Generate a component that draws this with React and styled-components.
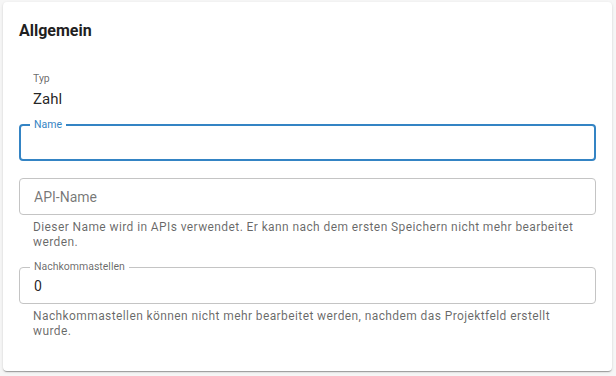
import React from 'react';
import styled, { createGlobalStyle } from 'styled-components';

const GlobalStyle = createGlobalStyle`
	html, body {
		margin: 0;
		padding: 0;
		background: #f6f6f6;
		font-family: Roboto, 'Liberation Sans', Arial, sans-serif;
		color: rgba(0, 0, 0, 0.87);
	}
	* {
		box-sizing: border-box;
	}
`;

const FIELDS = [
	{ label: 'Name', value: '', focused: true },
	{
		placeholder: 'API-Name',
		helper: 'Dieser Name wird in APIs verwendet. Er kann nach dem ersten Speichern nicht mehr bearbeitet werden.',
	},
	{
		label: 'Nachkommastellen',
		value: '0',
		helper: 'Nachkommastellen können nicht mehr bearbeitet werden, nachdem das Projektfeld erstellt wurde.',
	},
];

const App = () => {
	return (
		<>
			<GlobalStyle />
			<Page>
				<Card>
					<CardTitle>Allgemein</CardTitle>
					<ReadOnly>
						<ReadOnlyLabel>Typ</ReadOnlyLabel>
						<ReadOnlyValue>Zahl</ReadOnlyValue>
					</ReadOnly>
					<Fields>
						{FIELDS.map(({ label, value, placeholder, helper, focused }, i) => (
							<Field key={`field-${i}`}>
								<InputBox focused={focused}>
									{label && <FloatingLabel focused={focused}>{label}</FloatingLabel>}
									<Input defaultValue={value} placeholder={placeholder} />
								</InputBox>
								{helper && <HelperText>{helper}</HelperText>}
							</Field>
						))}
					</Fields>
				</Card>
			</Page>
		</>
	);
};

const Page = styled.div`
	padding: 2px 4px 5px 3px;
`;

const Card = styled.div`
	background: #fff;
	border-radius: 4px;
	box-shadow: 0px 2px 1px -1px rgba(0, 0, 0, 0.2), 0px 1px 1px 0px rgba(0, 0, 0, 0.14),
		0px 1px 3px 0px rgba(0, 0, 0, 0.12);
	padding: 17px 16px 32px 16px;
	height: 369px;
`;

const CardTitle = styled.h2`
	margin: 0;
	font-size: 16px;
	font-weight: 700;
	line-height: 24px;
	color: #1f1f1f;
`;

const ReadOnly = styled.div`
	display: flex;
	flex-direction: column;
	gap: 3px;
	margin-top: 29px;
	padding-left: 14px;
`;

const ReadOnlyLabel = styled.span`
	font-size: 10.5px;
	line-height: 14px;
	color: rgba(0, 0, 0, 0.6);
`;

const ReadOnlyValue = styled.span`
	font-size: 15px;
	line-height: 20px;
	color: rgba(0, 0, 0, 0.87);
`;

const Fields = styled.div`
	display: flex;
	flex-direction: column;
	gap: 17px;
	margin-top: 15px;
`;

const Field = styled.div`
	display: flex;
	flex-direction: column;
`;

const InputBox = styled.div`
	position: relative;
	display: flex;
	align-items: center;
	height: 37px;
	border-radius: 4px;
	border: ${props => (props.focused ? '2px solid #3484c4' : '1px solid #c4c4c4')};
	padding: 0 ${props => (props.focused ? '13px' : '14px')};
`;

const FloatingLabel = styled.span`
	position: absolute;
	top: -7px;
	left: ${props => (props.focused ? '9px' : '10px')};
	padding: 0 4px;
	background: #fff;
	font-size: 10.5px;
	line-height: 12px;
	color: ${props => (props.focused ? '#3484c4' : 'rgba(0, 0, 0, 0.6)')};
`;

const Input = styled.input`
	flex: 1;
	border: none;
	outline: none;
	padding: 0;
	background: transparent;
	font-family: inherit;
	font-size: 14px;
	line-height: 20px;
	color: rgba(0, 0, 0, 0.87);
	&::placeholder {
		color: rgba(0, 0, 0, 0.55);
		opacity: 1;
	}
`;

const HelperText = styled.p`
	margin: 5px 14px 0 14px;
	font-size: 12px;
	line-height: 15px;
	letter-spacing: 0.4px;
	color: rgba(0, 0, 0, 0.6);
`;

export default App;
